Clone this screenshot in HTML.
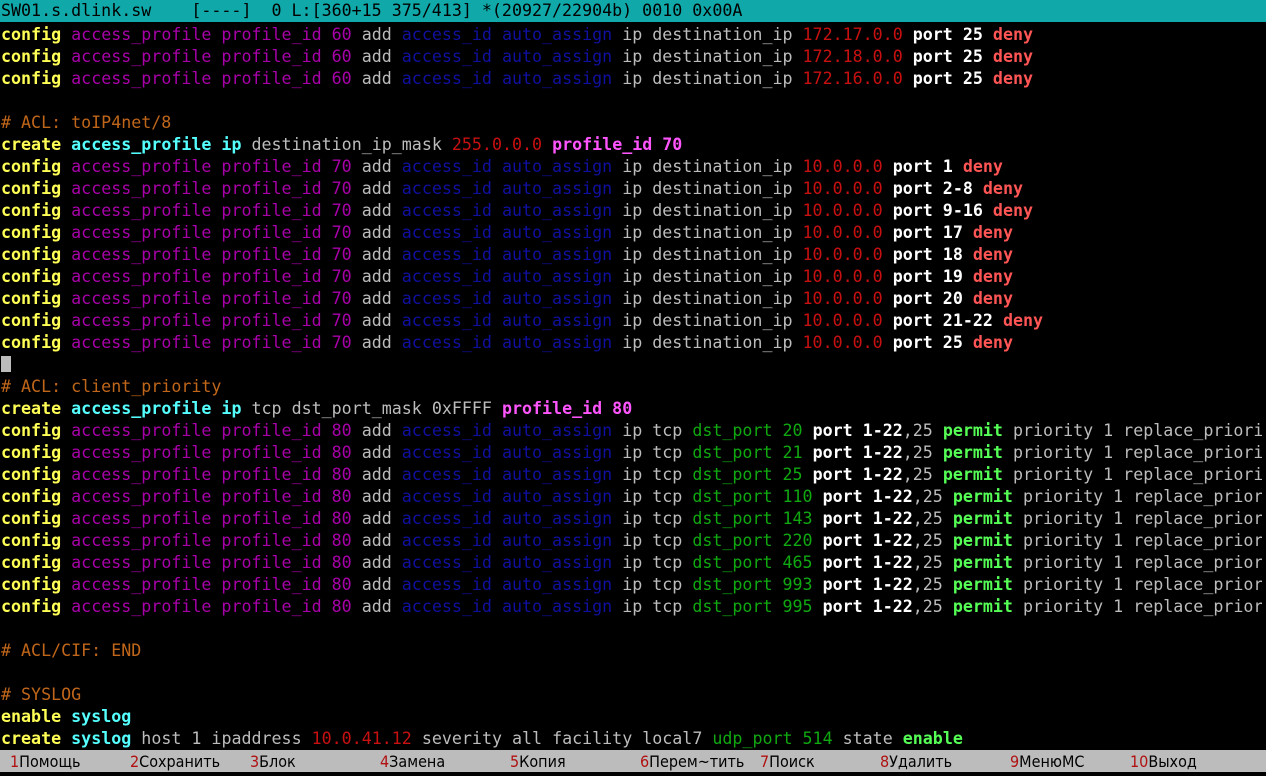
<!DOCTYPE html>
<html><head><meta charset="utf-8"><style>
html,body{margin:0;padding:0;background:#000;width:1266px;height:776px;overflow:hidden}
.s{font-family:"DejaVu Sans Mono","Liberation Mono",monospace;font-size:16.65px;line-height:22px;color:#bcbcbc}
.l{height:22px;width:1261px;overflow:hidden;white-space:pre;position:relative;top:2px;padding-left:1px}
.h{background:#10a8a8;color:#000;width:1265px;top:0}
.y{color:#ffff55;font-weight:bold}.m{color:#a800a8}.b{color:#1010a0}.r{color:#c81010}
.w{color:#fff;font-weight:bold}.R{color:#ff5555;font-weight:bold}.c{color:#55ffff;font-weight:bold}
.M{color:#ff55ff;font-weight:bold}.o{color:#c0661a}.G{color:#10a810}.P{color:#55ff55;font-weight:bold}
.bar{position:absolute;left:0;top:750px;width:1266px;height:22px;background:#bcbcbc;font-family:"DejaVu Sans Condensed","Liberation Sans Narrow","DejaVu Sans",sans-serif;font-size:16px;line-height:22px;color:#000}
.bar span{position:absolute;top:1px;white-space:pre}.bar i{font-style:normal;color:#b01010}
.cur{position:absolute;left:1px;top:356px;width:10px;height:16px;background:#bcbcbc}
</style></head><body>
<div class="s">
<div class="l h">SW01.s.dlink.sw    [----]  0 L:[360+15 375/413] *(20927/22904b) 0010 0x00A</div>
<div class="l"><span class="y">config</span> <span class="m">access_profile profile_id 60</span> add <span class="b">access_id auto_assign</span> ip destination_ip <span class="r">172.17.0.0</span> <span class="w">port 25</span> <span class="R">deny</span></div>
<div class="l"><span class="y">config</span> <span class="m">access_profile profile_id 60</span> add <span class="b">access_id auto_assign</span> ip destination_ip <span class="r">172.18.0.0</span> <span class="w">port 25</span> <span class="R">deny</span></div>
<div class="l"><span class="y">config</span> <span class="m">access_profile profile_id 60</span> add <span class="b">access_id auto_assign</span> ip destination_ip <span class="r">172.16.0.0</span> <span class="w">port 25</span> <span class="R">deny</span></div>
<div class="l"> </div>
<div class="l"><span class="o"># ACL: toIP4net/8</span></div>
<div class="l"><span class="y">create</span> <span class="c">access_profile ip</span> destination_ip_mask <span class="r">255.0.0.0</span> <span class="M">profile_id 70</span></div>
<div class="l"><span class="y">config</span> <span class="m">access_profile profile_id 70</span> add <span class="b">access_id auto_assign</span> ip destination_ip <span class="r">10.0.0.0</span> <span class="w">port 1</span> <span class="R">deny</span></div>
<div class="l"><span class="y">config</span> <span class="m">access_profile profile_id 70</span> add <span class="b">access_id auto_assign</span> ip destination_ip <span class="r">10.0.0.0</span> <span class="w">port 2-8</span> <span class="R">deny</span></div>
<div class="l"><span class="y">config</span> <span class="m">access_profile profile_id 70</span> add <span class="b">access_id auto_assign</span> ip destination_ip <span class="r">10.0.0.0</span> <span class="w">port 9-16</span> <span class="R">deny</span></div>
<div class="l"><span class="y">config</span> <span class="m">access_profile profile_id 70</span> add <span class="b">access_id auto_assign</span> ip destination_ip <span class="r">10.0.0.0</span> <span class="w">port 17</span> <span class="R">deny</span></div>
<div class="l"><span class="y">config</span> <span class="m">access_profile profile_id 70</span> add <span class="b">access_id auto_assign</span> ip destination_ip <span class="r">10.0.0.0</span> <span class="w">port 18</span> <span class="R">deny</span></div>
<div class="l"><span class="y">config</span> <span class="m">access_profile profile_id 70</span> add <span class="b">access_id auto_assign</span> ip destination_ip <span class="r">10.0.0.0</span> <span class="w">port 19</span> <span class="R">deny</span></div>
<div class="l"><span class="y">config</span> <span class="m">access_profile profile_id 70</span> add <span class="b">access_id auto_assign</span> ip destination_ip <span class="r">10.0.0.0</span> <span class="w">port 20</span> <span class="R">deny</span></div>
<div class="l"><span class="y">config</span> <span class="m">access_profile profile_id 70</span> add <span class="b">access_id auto_assign</span> ip destination_ip <span class="r">10.0.0.0</span> <span class="w">port 21-22</span> <span class="R">deny</span></div>
<div class="l"><span class="y">config</span> <span class="m">access_profile profile_id 70</span> add <span class="b">access_id auto_assign</span> ip destination_ip <span class="r">10.0.0.0</span> <span class="w">port 25</span> <span class="R">deny</span></div>
<div class="l"> </div>
<div class="l"><span class="o"># ACL: client_priority</span></div>
<div class="l"><span class="y">create</span> <span class="c">access_profile ip</span> tcp dst_port_mask 0xFFFF <span class="M">profile_id 80</span></div>
<div class="l"><span class="y">config</span> <span class="m">access_profile profile_id 80</span> add <span class="b">access_id auto_assign</span> ip tcp <span class="G">dst_port 20</span> <span class="w">port 1-22</span>,25 <span class="P">permit</span> priority 1 replace_priority</div>
<div class="l"><span class="y">config</span> <span class="m">access_profile profile_id 80</span> add <span class="b">access_id auto_assign</span> ip tcp <span class="G">dst_port 21</span> <span class="w">port 1-22</span>,25 <span class="P">permit</span> priority 1 replace_priority</div>
<div class="l"><span class="y">config</span> <span class="m">access_profile profile_id 80</span> add <span class="b">access_id auto_assign</span> ip tcp <span class="G">dst_port 25</span> <span class="w">port 1-22</span>,25 <span class="P">permit</span> priority 1 replace_priority</div>
<div class="l"><span class="y">config</span> <span class="m">access_profile profile_id 80</span> add <span class="b">access_id auto_assign</span> ip tcp <span class="G">dst_port 110</span> <span class="w">port 1-22</span>,25 <span class="P">permit</span> priority 1 replace_priority</div>
<div class="l"><span class="y">config</span> <span class="m">access_profile profile_id 80</span> add <span class="b">access_id auto_assign</span> ip tcp <span class="G">dst_port 143</span> <span class="w">port 1-22</span>,25 <span class="P">permit</span> priority 1 replace_priority</div>
<div class="l"><span class="y">config</span> <span class="m">access_profile profile_id 80</span> add <span class="b">access_id auto_assign</span> ip tcp <span class="G">dst_port 220</span> <span class="w">port 1-22</span>,25 <span class="P">permit</span> priority 1 replace_priority</div>
<div class="l"><span class="y">config</span> <span class="m">access_profile profile_id 80</span> add <span class="b">access_id auto_assign</span> ip tcp <span class="G">dst_port 465</span> <span class="w">port 1-22</span>,25 <span class="P">permit</span> priority 1 replace_priority</div>
<div class="l"><span class="y">config</span> <span class="m">access_profile profile_id 80</span> add <span class="b">access_id auto_assign</span> ip tcp <span class="G">dst_port 993</span> <span class="w">port 1-22</span>,25 <span class="P">permit</span> priority 1 replace_priority</div>
<div class="l"><span class="y">config</span> <span class="m">access_profile profile_id 80</span> add <span class="b">access_id auto_assign</span> ip tcp <span class="G">dst_port 995</span> <span class="w">port 1-22</span>,25 <span class="P">permit</span> priority 1 replace_priority</div>
<div class="l"> </div>
<div class="l"><span class="o"># ACL/CIF: END</span></div>
<div class="l"> </div>
<div class="l"><span class="o"># SYSLOG</span></div>
<div class="l"><span class="y">enable</span> <span class="c">syslog</span></div>
<div class="l"><span class="y">create</span> <span class="c">syslog</span> host 1 ipaddress <span class="r">10.0.41.12</span> severity all facility local7 <span class="G">udp_port 514</span> state <span class="P">enable</span></div>
</div>
<div class="cur"></div>
<div class="bar">
<span style="left:10px"><i>1</i>Помощь</span>
<span style="left:130px"><i>2</i>Сохранить</span>
<span style="left:250px"><i>3</i>Блок</span>
<span style="left:380px"><i>4</i>Замена</span>
<span style="left:510px"><i>5</i>Копия</span>
<span style="left:640px"><i>6</i>Перем~тить</span>
<span style="left:760px"><i>7</i>Поиск</span>
<span style="left:880px"><i>8</i>Удалить</span>
<span style="left:1010px"><i>9</i>МенюМС</span>
<span style="left:1130px"><i>10</i>Выход</span>
</div>
</body></html>
